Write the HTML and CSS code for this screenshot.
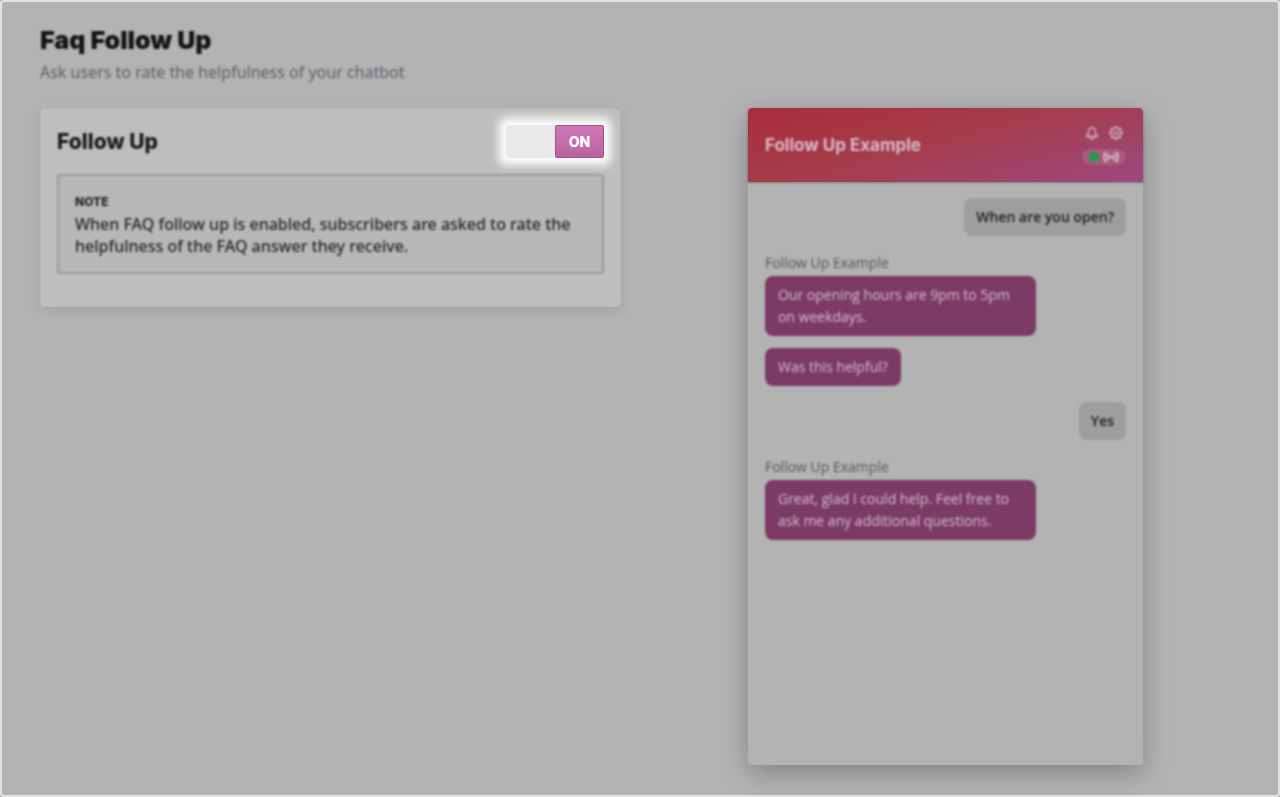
FILE: index.html
```html
<!DOCTYPE html>
<html lang="en">
<head>
  <meta charset="UTF-8">
  <meta name="viewport" content="width=device-width, initial-scale=1.0">
  <title>Faq Follow Up</title>
  <link rel="stylesheet" href="styles.css">
</head>
<body>
  <div class="page">
    <header class="page-header dimmed">
      <h1>Faq Follow Up</h1>
      <p>Ask users to rate the helpfulness of your chatbot</p>
    </header>

    <main class="columns">
      <section class="card">
        <div class="card-top">
          <h2 class="dimmed">Follow Up</h2>
          <label class="toggle">
            <input type="checkbox" role="switch" aria-label="Follow Up" checked>
            <span class="toggle-knob">ON</span>
          </label>
        </div>
        <div class="note dimmed">
          <strong class="note-title">NOTE</strong>
          <p>When FAQ follow up is enabled, subscribers are asked to rate the helpfulness of the FAQ answer they receive.</p>
        </div>
      </section>

      <section class="chat">
        <div class="chat-header">
          <h3 class="dimmed">Follow Up Example</h3>
          <div class="chat-tools dimmed">
            <div class="chat-icons">
              <button type="button" class="icon-button" aria-label="Notifications">
                <svg viewBox="0 0 14 14" width="14" height="14" fill="none" stroke="currentColor" stroke-width="1.3" stroke-linecap="round" stroke-linejoin="round">
                  <path d="M7 .8v1M7 1.8C4.700 1.800 3.600 3.500 3.600 5.500c0 2.600-.7 3.800-2.200 5h11.200c-1.500-1.200-2.200-2.400-2.200-5C10.400 3.500 9.300 1.800 7 1.800z"/>
                  <path d="M5.200 12c.4 1.300 3.200 1.300 3.600 0"/>
                </svg>
              </button>
              <button type="button" class="icon-button" aria-label="Settings">
                <svg viewBox="0 0 14 14" width="14" height="14" fill="none" stroke="currentColor" stroke-width="1.2">
                  <circle cx="7" cy="7" r="5"/>
                  <circle cx="7" cy="7" r="2"/>
                  <path stroke-width="2" d="M7 0v2M7 12v2M0 7h2M12 7h2M2 2l1.500 1.500M10.500 10.500L12 12M12 2l-1.500 1.500M3.500 10.500L2 12"/>
                </svg>
              </button>
            </div>
            <div class="status">
              <span class="status-dot"></span>
              <svg viewBox="0 0 16 12" width="16" height="12" fill="none" stroke="currentColor" stroke-width="2" stroke-linecap="round">
                <path d="M2.500 1.500C1 4 1 8 2.500 10.500M4.500 3.500C5.500 5 5.500 7 4.500 8.500M13.500 1.500C15 4 15 8 13.500 10.500M11.500 3.500C10.500 5 10.500 7 11.500 8.500"/>
                <circle cx="8" cy="6" r="1.500" fill="currentColor" stroke="none"/>
              </svg>
            </div>
          </div>
        </div>

        <div class="chat-body dimmed">
          <p class="bubble user">When are you open?</p>
          <div class="bot-group">
            <span class="sender">Follow Up Example</span>
            <p class="bubble bot">Our opening hours are 9pm to 5pm on weekdays.</p>
            <p class="bubble bot">Was this helpful?</p>
          </div>
          <p class="bubble user">Yes</p>
          <div class="bot-group">
            <span class="sender">Follow Up Example</span>
            <p class="bubble bot">Great, glad I could help. Feel free to ask me any additional questions.</p>
          </div>
        </div>
      </section>
    </main>
  </div>
</body>
</html>
```
FILE: styles.css
```css
* {
  box-sizing: border-box;
}
body {
  margin: 0;
  background: #b3b3b3;
  color: #262626;
  font-family: "Noto Sans", "Open Sans", sans-serif;
  font-size: 16px;
}
h1, h2, h3, p {
  margin: 0;
}
h1, h2, h3, .note-title, .toggle {
  font-family: Inter, sans-serif;
}
.page {
  min-height: 100vh;
  display: flex;
  flex-direction: column;
  gap: 24px;
  padding: 20px 42px 30px 38px;
  border: 2px solid #e2e2e2;
  border-radius: 4px;
}
/* everything behind the highlighted toggle is softened */
.dimmed {
  filter: blur(1px);
}
.page-header h1 {
  font-size: 25px;
  font-weight: 900;
  line-height: 36px;
  color: #141414;
}
.page-header p {
  line-height: 28px;
  margin-bottom: -2px;
  color: #5f5c68;
}
.columns {
  flex: 1;
  display: grid;
  grid-template-columns: 1fr 1fr;
  gap: 34px;
}
.card {
  align-self: start;
  padding: 16px 16px 32px;
  background: #bebebe;
  border: 1px solid #b4b4b4;
  border-radius: 4px;
  box-shadow: 0 4px 12px rgba(0, 0, 0, 0.08);
}
.card-top {
  display: flex;
  justify-content: space-between;
  align-items: center;
  margin-bottom: 16px;
}
.card-top h2 {
  font-size: 21px;
  font-weight: 800;
  color: #1a1a1a;
}
.toggle {
  position: relative;
  z-index: 1;
  display: flex;
  justify-content: flex-end;
  width: 98px;
  height: 33px;
  background: #e9e9eb;
  border-radius: 2px;
  box-shadow: 0 0 10px 7px #fff;
  cursor: pointer;
}
.toggle input {
  position: absolute;
  inset: 0;
  width: 100%;
  height: 100%;
  margin: 0;
  opacity: 0;
}
.toggle-knob {
  width: 50%;
  display: flex;
  align-items: center;
  justify-content: center;
  font-size: 14px;
  font-weight: 800;
  color: #fff;
  background: linear-gradient(#d078b8, #b8639f);
  border: 1px solid #aa4f90;
  border-radius: 2px;
}
.note {
  padding: 15px 16px;
  background: #b7b7b7;
  border: 2px solid #9a9a9a;
  border-radius: 4px;
  font-weight: 500;
  line-height: 22px;
}
.note-title {
  display: block;
  font-size: 12px;
  font-weight: 800;
}
.chat {
  display: flex;
  flex-direction: column;
  justify-self: center;
  width: 68%;
  border-radius: 4px;
  background: #b3b3b3;
  box-shadow: 0 8px 26px rgba(0, 0, 0, 0.26);
}
.chat-header {
  display: flex;
  align-items: center;
  justify-content: space-between;
  height: 74px;
  padding: 0 17px;
  border-radius: 4px 4px 0 0;
  background: linear-gradient(165deg, #aa2c3a, #a53c4b 45%, #9c497e);
  box-shadow: 0 1px 3px rgba(0, 0, 0, 0.3);
  color: #d8bccb;
}
.chat-header h3 {
  font-size: 17px;
  font-weight: 700;
}
.chat-tools {
  display: flex;
  flex-direction: column;
  align-items: center;
  gap: 9px;
}
.chat-icons {
  display: flex;
  gap: 10px;
}
.icon-button {
  display: flex;
  padding: 0;
  border: 0;
  background: none;
  color: inherit;
  cursor: pointer;
}
.status {
  display: flex;
  align-items: center;
  gap: 4px;
  padding: 2px 7px;
  border-radius: 8px;
  background: #a95a7c;
}
.status-dot {
  width: 10px;
  height: 10px;
  border-radius: 50%;
  background: #219c48;
}
.chat-body {
  flex: 1;
  display: flex;
  flex-direction: column;
  gap: 16px;
  padding: 16px 17px;
  font-family: "Open Sans", "Noto Sans", sans-serif;
}
.bubble {
  padding: 8px 12px;
  border-radius: 8px;
  font-size: 14px;
  line-height: 22px;
}
.user {
  align-self: flex-end;
  background: #9e9ea0;
  color: #1c1c1c;
  font-weight: 600;
}
.bot-group {
  display: flex;
  flex-direction: column;
  align-items: flex-start;
  gap: 12px;
}
.bot {
  max-width: 75%;
  padding: 8px 13px;
  background: #7c3b64;
  color: #d6bccd;
}
.sender {
  margin-bottom: -10px;
  font-size: 14px;
  line-height: 22px;
  color: #57565e;
}
```
